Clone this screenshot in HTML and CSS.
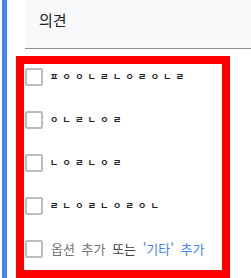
FILE: index.html
```html
<!DOCTYPE html>
<html lang="ko">
<head>
<meta charset="utf-8">
<link rel="stylesheet" href="styles.css">
</head>
<body>
<div class="page">
  <div class="gutter"></div>
  <div class="accent"></div>
  <div class="main">
    <div class="header"><span class="title">의견</span></div>
    <div class="box">
      <div class="row"><span class="check"></span><span class="opt">ㅍㅇㅇㄴㄹㄴㅇㄹㅇㄴㄹ</span></div>
      <div class="row"><span class="check"></span><span class="opt">ㅇㄴㄹㄴㅇㄹ</span></div>
      <div class="row"><span class="check"></span><span class="opt">ㄴㅇㄹㄴㅇㄹ</span></div>
      <div class="row"><span class="check"></span><span class="opt">ㄹㄴㅇㄹㄴㅇㄹㅇㄴ</span></div>
      <div class="row"><span class="check"></span><span class="add"><span class="muted">옵션 추가</span> <span class="dark">또는</span> <span class="link">'기타' 추가</span></span></div>
    </div>
  </div>
</div>
</body>
</html>
```
FILE: styles.css
```css
html, body {
  margin: 0;
  padding: 0;
  background: #ffffff;
  overflow: hidden;
}
body {
  font-family: "Noto Sans CJK KR", "Noto Sans", sans-serif;
  color: #202124;
}
.page {
  display: flex;
  height: 278px;
}
.gutter {
  width: 2px;
  flex: none;
}
.accent {
  width: 5px;
  flex: none;
  background: #4285f4;
}
.main {
  flex: 1;
  display: flex;
  flex-direction: column;
}
.header {
  margin-left: 18px;
  height: 38px;
  padding-top: 10px;
  padding-left: 14px;
  background: #f8f9fa;
  border-bottom: 1px solid #8a8d91;
}
.title {
  display: block;
  font-size: 15px;
  line-height: 20px;
  color: #202124;
}
.box {
  margin-left: 9px;
  margin-top: 7px;
  width: 197px;
  border: 8px solid #ff0000;
  padding: 4px 0 12px 1px;
  display: flex;
  flex-direction: column;
  gap: 25px;
  flex: 1;
}
.row {
  display: flex;
  align-items: center;
  height: 18px;
}
.check {
  width: 14px;
  height: 14px;
  border: 2px solid #bdbdbd;
  border-radius: 2px;
  flex: none;
}
.opt {
  margin-left: 7px;
  font-size: 9px;
  font-weight: 700;
  letter-spacing: 4.3px;
  line-height: 18px;
  color: #202124;
}
.add {
  margin-left: 8px;
  font-size: 13px;
  word-spacing: 3px;
  line-height: 18px;
  white-space: nowrap;
}
.muted { color: #70757a; }
.dark { color: #3c4043; }
.link { color: #4285f4; }
```
